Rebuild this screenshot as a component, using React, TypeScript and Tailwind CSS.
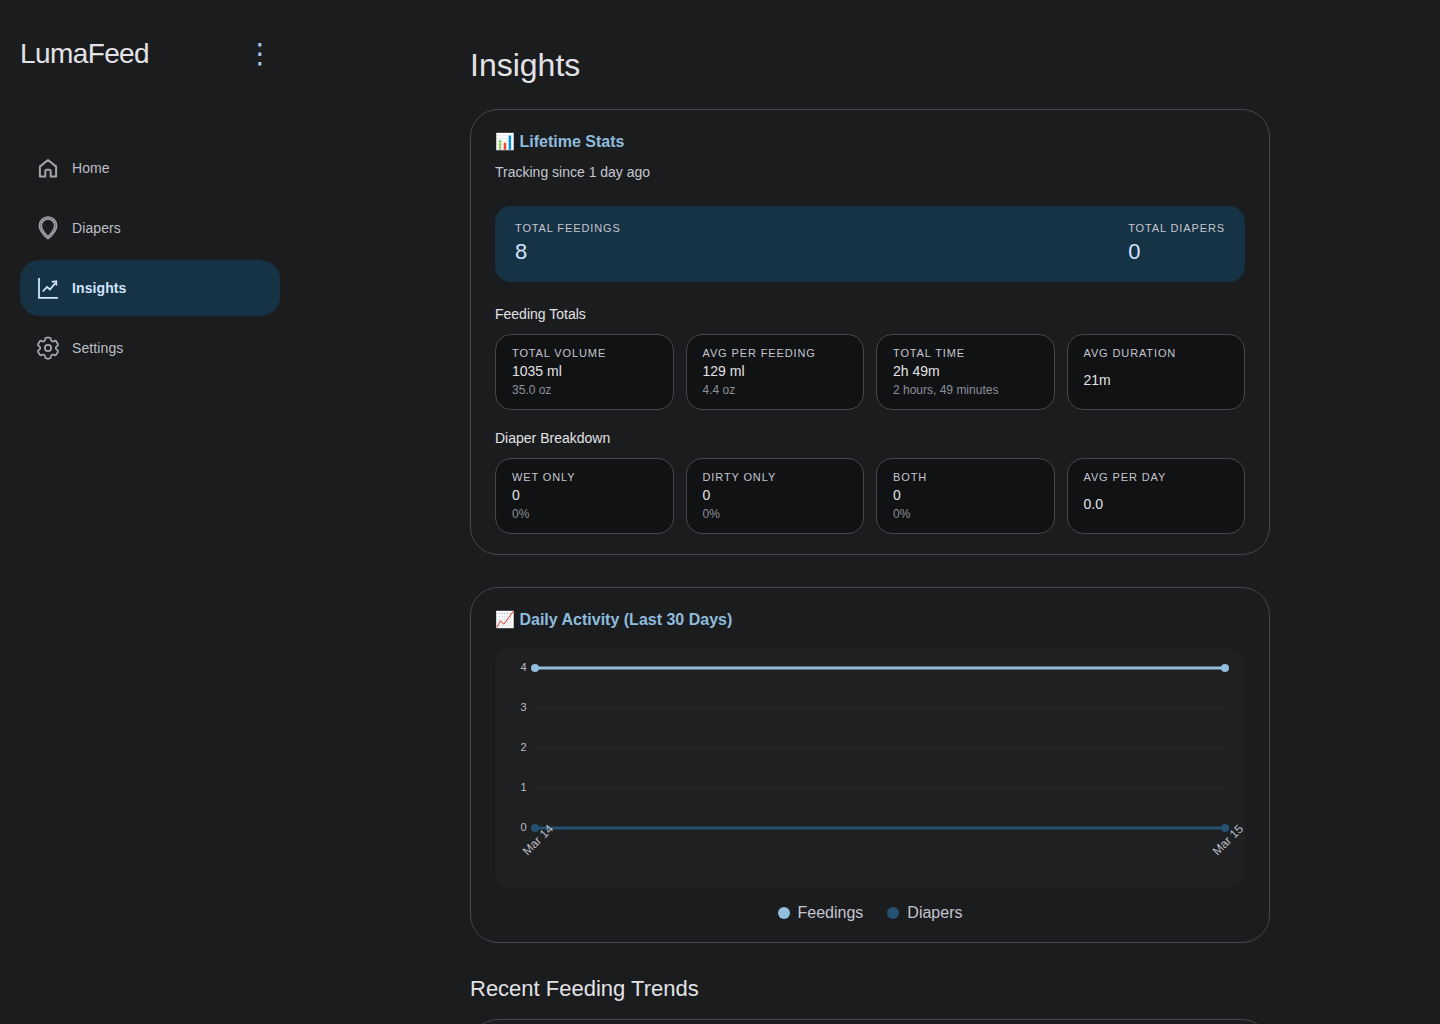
import React from "react";

const sans = "font-['Liberation_Sans',Arial,sans-serif]";
const chartFont = "'Liberation Sans', Arial, sans-serif";

function Stat({ label, value, sub }: { label: string; value: string; sub?: string }) {
  return (
    <div className="flex-1 h-[76px] rounded-2xl border border-[#44474e] bg-[#111214] px-4 py-[10px] flex flex-col">
      <div className="text-[11px] leading-4 tracking-[0.88px] text-[#c4c6d0] uppercase">{label}</div>
      <div className={`flex-1 flex flex-col ${sub ? "justify-start" : "justify-center"}`}>
        <div className="text-sm leading-5 text-[#e3e2e6]">{value}</div>
        {sub ? <div className="text-xs leading-4 mt-px text-[#8e9099]">{sub}</div> : null}
      </div>
    </div>
  );
}

function NavItem({ icon, label, active }: { icon: React.ReactNode; label: string; active?: boolean }) {
  return (
    <div className={`h-14 w-[260px] rounded-[20px] flex items-center pl-4 gap-3 text-sm tracking-[0.1px] ${active ? "bg-[#163245] text-[#d1e4ff] font-bold" : "text-[#bcbec6]"}`}>
      <span className={`w-6 h-6 flex items-center justify-center ${active ? "text-[#d1e4ff]" : "text-[#a3a5ad]"}`}>{icon}</span>
      <span>{label}</span>
    </div>
  );
}

function Chart() {
  const xs = [535, 1225];
  return (
    <svg width="750" height="240" viewBox="495 648 750 240" className="block overflow-visible">
      {[708, 748, 788].map((y) => (
        <line key={y} x1="535" x2="1225" y1={y} y2={y} stroke="#2a2b2e" strokeWidth="1" />
      ))}
      {[[4, 671], [3, 711], [2, 751], [1, 791], [0, 831]].map(([n, y]) => (
        <text key={n} x="526.500" y={y} textAnchor="end" fontSize="11" fill="#bbbdc2" fontFamily={chartFont}>{n}</text>
      ))}
      <line x1="535" x2="1225" y1="668" y2="668" stroke="#93bedc" strokeWidth="3" />
      <line x1="535" x2="1225" y1="828" y2="828" stroke="#265272" strokeWidth="3" />
      {xs.map((x) => <circle key={x} cx={x} cy="668" r="4" fill="#93bedc" />)}
      {xs.map((x) => <circle key={x} cx={x} cy="828" r="4" fill="#265272" />)}
      <text transform="translate(527.500 856) rotate(-45)" fontSize="12" fill="#bbbdc2" fontFamily={chartFont}>Mar 14</text>
      <text transform="translate(1217.500 856) rotate(-45)" fontSize="12" fill="#bbbdc2" fontFamily={chartFont}>Mar 15</text>
    </svg>
  );
}

export default function App() {
  const pin = "M12 21.500c-1.200-.6-7.700-6.700-7.700-12A7.700 7.700 0 0 1 12 2a7.700 7.700 0 0 1 7.700 7.500c0 5.300-6.500 11.400-7.700 12z";
  return (
    <div className={`h-screen overflow-hidden bg-[#1b1c1e] flex ${sans} text-[#e3e2e6]`}>
      <aside className="w-[300px] shrink-0 px-5">
        <div className="h-[108px] flex items-center justify-between">
          <div className="text-[28px] leading-9 tracking-[-0.6px] text-[#e3e2e6]">LumaFeed</div>
          <div className="w-10 h-10 flex items-center justify-center text-[28px] leading-none text-[#a9c7e8] font-['DejaVu_Sans',sans-serif]">⋮</div>
        </div>
        <nav className="mt-8 flex flex-col gap-1">
          <NavItem
            label="Home"
            icon={
              <svg width="24" height="24" viewBox="0 0 24 24" fill="none" stroke="currentColor" strokeWidth="2" strokeLinejoin="round" className="shrink-0">
                <path d="M3.900 20.400V10.600L12 4l8.100 6.600v9.800h-5.400v-5.200a1.500 1.500 0 0 0-1.500-1.500h-2.400a1.500 1.500 0 0 0-1.500 1.500v5.200z" />
              </svg>
            }
          />
          <NavItem
            label="Diapers"
            icon={
              <svg width="24" height="24" viewBox="0 0 24 24" fill="none" className="shrink-0">
                <path d={pin} stroke="currentColor" strokeWidth="3.400" />
                <path d={pin} stroke="#6f7178" strokeWidth="1" />
              </svg>
            }
          />
          <NavItem
            active
            label="Insights"
            icon={
              <svg width="24" height="24" viewBox="0 0 24 24" fill="none" stroke="currentColor" strokeWidth="1.800" className="shrink-0">
                <path d="M3 2v19.800H22" />
                <path d="M6.800 15.500l4.200-4.500 3 2.500 5.500-6.800" />
                <path d="M15.800 5.800l4.400-.6.200 4.300" />
              </svg>
            }
          />
          <NavItem
            label="Settings"
            icon={
              <svg width="28" height="28" viewBox="0 0 24 24" fill="none" stroke="currentColor" strokeWidth="1.500" strokeLinecap="round" strokeLinejoin="round" className="shrink-0">
                <path d="M9.594 3.940c.090-.542.560-.940 1.110-.940h2.593c.550 0 1.020.398 1.110.940l.213 1.281c.063.374.313.686.645.870.074.040.147.083.220.127.324.196.720.257 1.075.124l1.217-.456a1.125 1.125 0 0 1 1.370.490l1.296 2.247a1.125 1.125 0 0 1-.260 1.431l-1.003.827c-.293.240-.438.613-.431.992a6.759 6.759 0 0 1 0 .255c-.007.378.138.750.430.990l1.005.828c.424.350.534.954.260 1.430l-1.298 2.247a1.125 1.125 0 0 1-1.369.491l-1.217-.456c-.355-.133-.750-.072-1.076.124a6.570 6.570 0 0 1-.220.128c-.331.183-.581.495-.644.869l-.213 1.280c-.090.543-.560.941-1.110.941h-2.594c-.550 0-1.020-.398-1.110-.940l-.213-1.281c-.062-.374-.312-.686-.644-.870a6.520 6.520 0 0 1-.220-.127c-.325-.196-.720-.257-1.076-.124l-1.217.456a1.125 1.125 0 0 1-1.369-.490l-1.297-2.247a1.125 1.125 0 0 1 .260-1.431l1.004-.827c.292-.240.437-.613.430-.992a6.932 6.932 0 0 1 0-.255c.007-.378-.138-.750-.430-.990l-1.004-.828a1.125 1.125 0 0 1-.260-1.430l1.297-2.247a1.125 1.125 0 0 1 1.370-.491l1.216.456c.356.133.751.072 1.076-.124.072-.044.146-.087.220-.128.332-.183.582-.495.644-.869l.214-1.281z" />
                <circle cx="12" cy="12" r="2.700" />
              </svg>
            }
          />
        </nav>
      </aside>

      <main className="flex-1 flex justify-center">
        <div className="w-[800px]">
          <h1 className="text-[32px] leading-10 pt-[45px] pb-[24px] h-[109px] font-normal">Insights</h1>

          <section className="h-[446px] rounded-[28px] border border-[#44474e] px-6 pt-5">
            <div className="text-base leading-6 font-bold text-[#8fbcdc]">📊 Lifetime Stats</div>
            <div className="mt-[8px] text-sm leading-5 text-[#c4c6d0]">Tracking since 1 day ago</div>
            <div className="mt-6 h-[76px] rounded-2xl bg-[#163245] px-5 pt-[14px] flex justify-between">
              <div>
                <div className="text-[11px] leading-4 tracking-[0.88px] text-[#c4c6d0]">TOTAL FEEDINGS</div>
                <div className="mt-[2px] text-[22px] leading-7 text-[#d1e4ff]">8</div>
              </div>
              <div>
                <div className="text-[11px] leading-4 tracking-[0.88px] text-[#c4c6d0]">TOTAL DIAPERS</div>
                <div className="mt-[2px] text-[22px] leading-7 text-[#d1e4ff]">0</div>
              </div>
            </div>
            <div className="mt-[22px] mb-[10px] text-sm leading-5">Feeding Totals</div>
            <div className="flex gap-3">
              <Stat label="Total Volume" value="1035 ml" sub="35.0 oz" />
              <Stat label="Avg per Feeding" value="129 ml" sub="4.4 oz" />
              <Stat label="Total Time" value="2h 49m" sub="2 hours, 49 minutes" />
              <Stat label="Avg Duration" value="21m" />
            </div>
            <div className="mt-[18px] mb-[10px] text-sm leading-5">Diaper Breakdown</div>
            <div className="flex gap-3">
              <Stat label="Wet Only" value="0" sub="0%" />
              <Stat label="Dirty Only" value="0" sub="0%" />
              <Stat label="Both" value="0" sub="0%" />
              <Stat label="Avg per Day" value="0.0" />
            </div>
          </section>

          <section className="mt-8 h-[356px] rounded-[28px] border border-[#44474e] px-6 pt-5">
            <div className="text-base leading-6 font-bold text-[#8fbcdc]">📈 Daily Activity (Last 30 Days)</div>
            <div className="mt-[16px] h-[240px] rounded-2xl bg-[#1f2022]">
              <Chart />
            </div>
            <div className="mt-[13px] flex justify-center items-center gap-6 text-base leading-6 text-[#c4c6d0]">
              <div className="flex items-center gap-2"><span className="w-3 h-3 rounded-full bg-[#93bedc]" />Feedings</div>
              <div className="flex items-center gap-2"><span className="w-3 h-3 rounded-full bg-[#265272]" />Diapers</div>
            </div>
          </section>

          <h2 className="mt-8 text-[22px] leading-7 font-normal">Recent Feeding Trends</h2>
          <section className="mt-4 h-[200px] rounded-[28px] border border-[#44474e]" />
        </div>
      </main>
    </div>
  );
}
